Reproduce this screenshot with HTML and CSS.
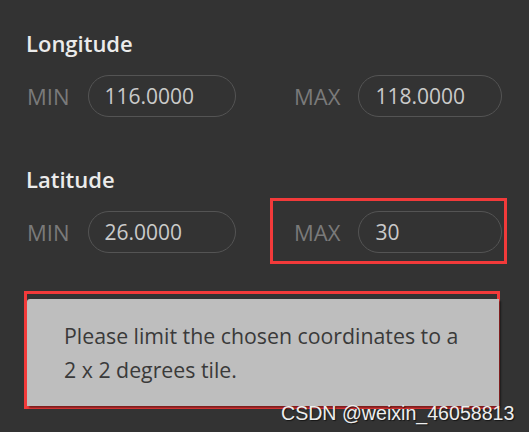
FILE: index.html
```html
<!DOCTYPE html>
<html lang="en">
<head>
    <meta charset="UTF-8">
    <meta name="viewport" content="width=device-width, initial-scale=1.0">
    <title>Bounding box</title>
    <link rel="stylesheet" href="styles.css">
</head>
<body>
    <div class="panel">
        <h2>Longitude</h2>
        <div class="row">
            <div class="field field-min">
                <label for="lon-min">MIN</label>
                <input type="text" id="lon-min" value="116.0000">
            </div>
            <div class="field field-max">
                <label for="lon-max">MAX</label>
                <input type="text" id="lon-max" value="118.0000">
            </div>
        </div>

        <h2>Latitude</h2>
        <div class="row">
            <div class="field field-min">
                <label for="lat-min">MIN</label>
                <input type="text" id="lat-min" value="26.0000">
            </div>
            <div class="field field-max marked">
                <label for="lat-max">MAX</label>
                <input type="text" id="lat-max" value="30">
            </div>
        </div>

        <div class="notice marked">
            <div class="notice-box">
                Please limit the chosen coordinates to a 2 x 2 degrees tile.
            </div>
        </div>
    </div>
    <div class="watermark">CSDN @weixin_46058813</div>
</body>
</html>
```

FILE: styles.css
```css
* {
    box-sizing: border-box;
}

body {
    margin: 0;
    padding: 0;
    height: 432px;
    background: #333333;
    font-family: "Open Sans", "Noto Sans", sans-serif;
    overflow: hidden;
    position: relative;
}

.panel {
    padding-top: 28px;
}

h2 {
    margin: 0 0 4px 26px;
    font-size: 22px;
    line-height: 30px;
    font-weight: 600;
    color: #ebebeb;
}

.row {
    display: flex;
    margin-bottom: 36px;
}

.field {
    display: flex;
    align-items: center;
    gap: 18px;
    padding: 10px 2px 8px 21px;
    border: 3px solid transparent;
}

.field-min {
    margin-left: 3px;
    width: 267px;
}

.field label {
    font-size: 22px;
    color: #7a7a7a;
}

.field input {
    height: 42px;
    padding: 0 0 0 16px;
    border: 1px solid #545454;
    border-radius: 21px;
    background: #333333;
    color: #cacaca;
    font-family: inherit;
    font-size: 21px;
    outline: none;
}

.field-min input {
    width: 148px;
}

.field-max input {
    width: 144px;
}

.marked {
    border-color: #f23a3a;
}

.notice {
    margin: -9px 0 0 24px;
    width: 476px;
    border: 3px solid #f23a3a;
    padding-top: 5px;
}

.notice-box {
    margin-right: -2px;
    padding: 20px 34px 19px 37px;
    background: #bebebe;
    border-top-left-radius: 3px;
    box-shadow: 2px 2px 2px rgba(0, 0, 0, 0.5);
    font-size: 21.3px;
    line-height: 34px;
    color: #3a3a3a;
}

.watermark {
    position: absolute;
    left: 281px;
    top: 402px;
    font-family: "Liberation Sans", Arial, sans-serif;
    font-size: 19.6px;
    color: #eeeeee;
    text-shadow: 1px 1px 1px rgba(0, 0, 0, 0.6);
    white-space: nowrap;
}
```
